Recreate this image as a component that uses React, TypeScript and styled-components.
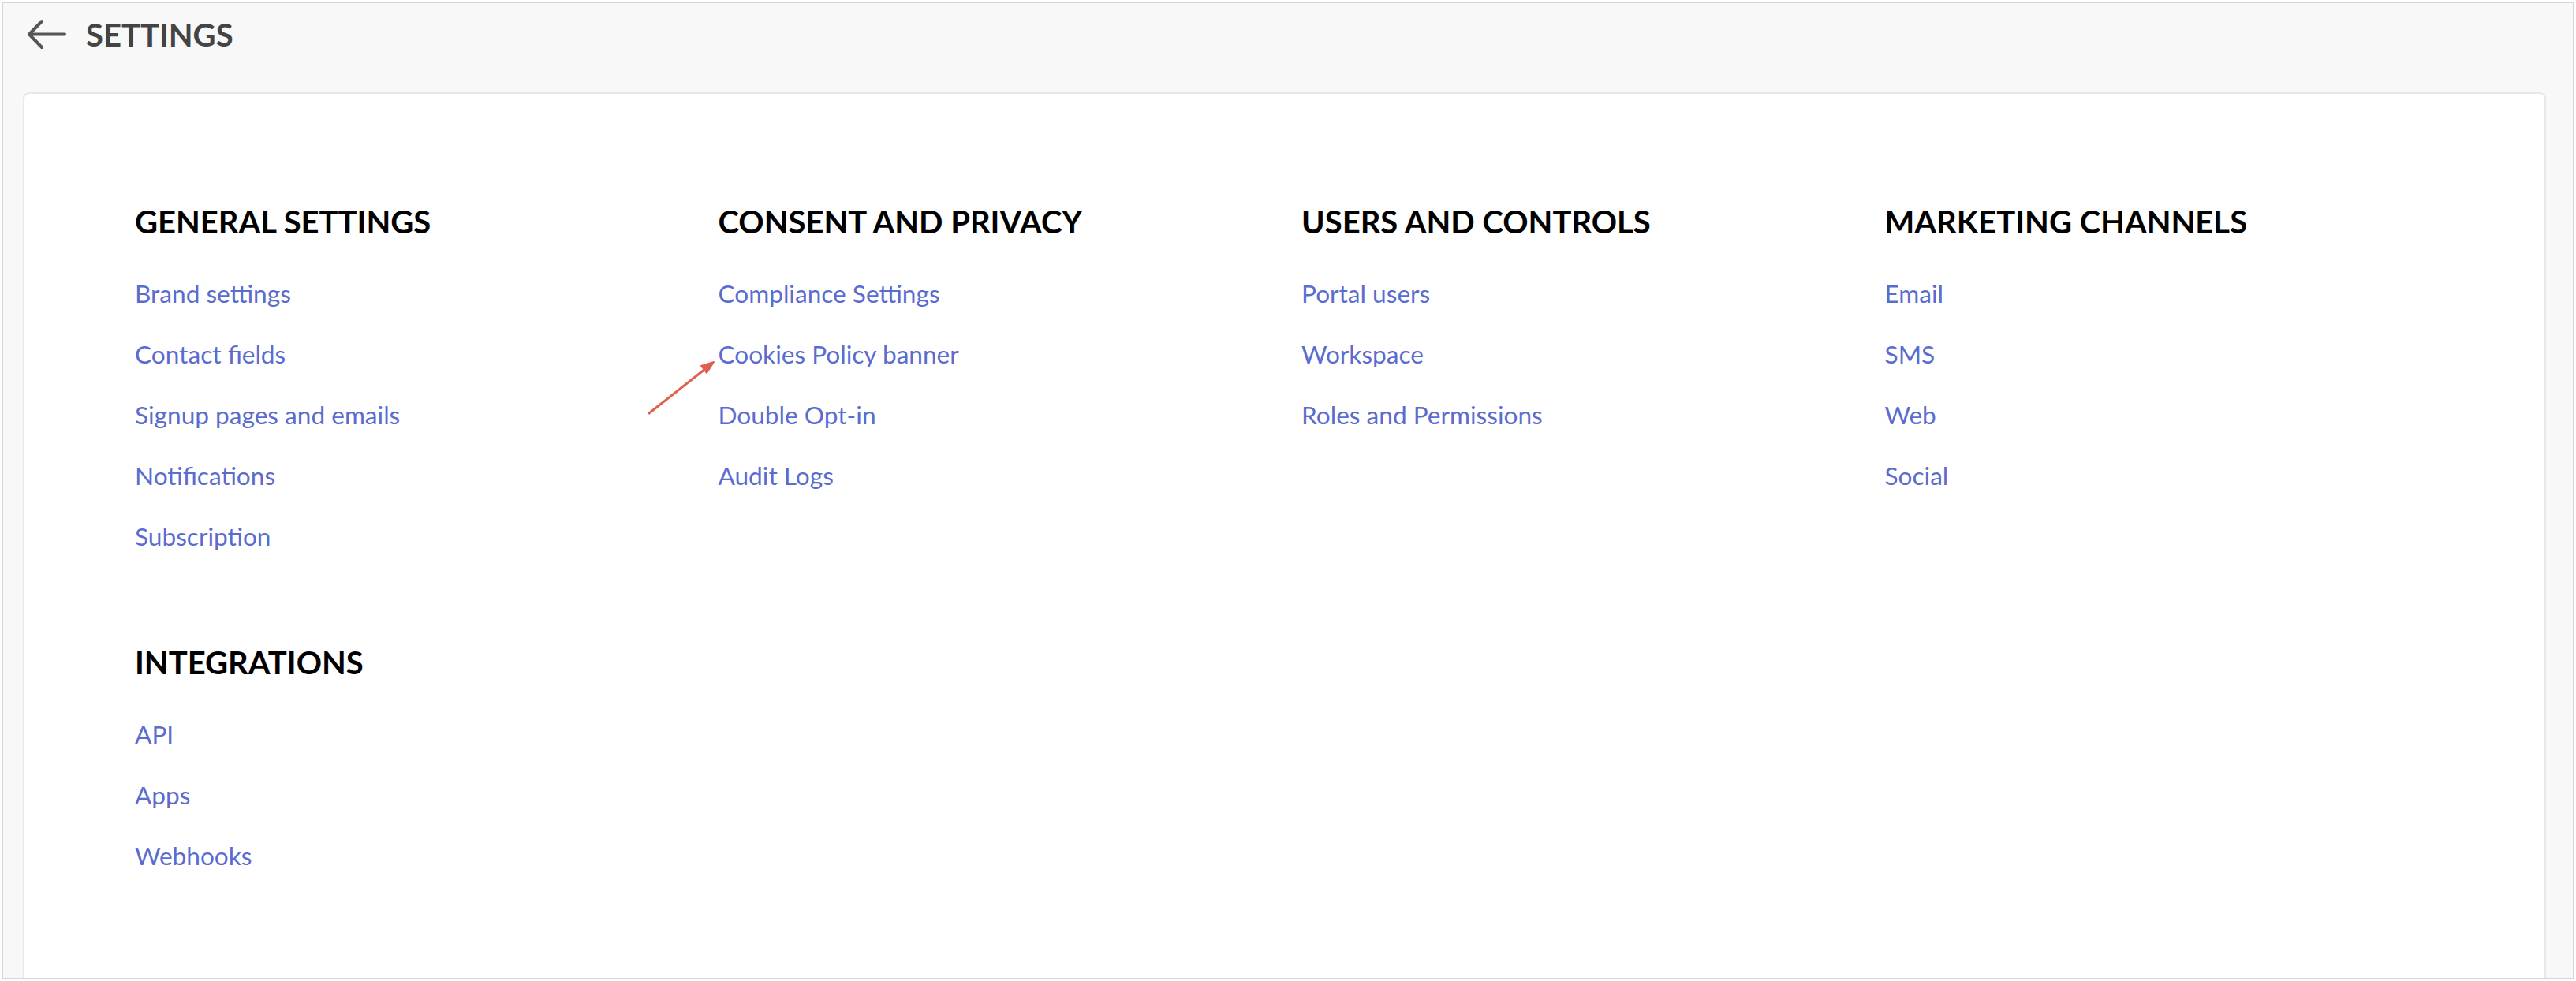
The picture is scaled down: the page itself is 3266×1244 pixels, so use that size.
import React from "react";
import styled, { createGlobalStyle } from "styled-components";

const Global = createGlobalStyle`
  html, body { margin: 0; padding: 0; background: #ffffff; }
  body { font-family: Lato, "Open Sans", sans-serif; }
  * { box-sizing: border-box; }
`;

const Frame = styled.div`
  position: relative;
  margin: 2px;
  height: 1240px;
  border: 2px solid #d4d5d7;
  background: #f8f8f8;
  overflow: hidden;
  display: flex;
  flex-direction: column;
`;

const TopBar = styled.header`
  display: flex;
  align-items: center;
  gap: 24px;
  height: 80px;
  padding: 0 0 0 29px;
`;

const BackButton = styled.button`
  display: flex;
  align-items: center;
  justify-content: center;
  padding: 0;
  border: none;
  background: transparent;
  width: 52px;
  height: 40px;
  cursor: pointer;
`;

const PageTitle = styled.h1`
  margin: 0;
  font-family: Lato, sans-serif;
  font-weight: 700;
  font-size: 40px;
  color: #444444;
  letter-spacing: 0;
`;

const Card = styled.main`
  position: relative;
  flex: 1;
  margin: 33px 34px 0 25px;
  background: #ffffff;
  border: 2px solid #e8e8e8;
  border-bottom: none;
  border-radius: 8px 8px 0 0;
  padding: 138px 0 0 140px;
`;

const Grid = styled.div`
  display: grid;
  grid-template-columns: repeat(4, 739.5px);
  row-gap: 98px;
`;

const Section = styled.section`
  display: flex;
  flex-direction: column;
`;

const SectionTitle = styled.h2`
  margin: 0 0 28px 0;
  font-family: Lato, sans-serif;
  font-weight: 700;
  font-size: 40px;
  line-height: 48px;
  color: #000000;
`;

const LinkList = styled.ul`
  list-style: none;
  margin: 0;
  padding: 0;
`;

const LinkItem = styled.li`
  height: 77px;
  display: flex;
  align-items: center;
`;

const SettingLink = styled.a`
  font-family: Lato, sans-serif;
  font-size: 31.6px;
  color: #5b6ccf;
  text-decoration: none;
`;

const Annotation = styled.svg`
  position: absolute;
  left: 814px;
  top: 451px;
  pointer-events: none;
`;

const sections = [
  {
    title: "GENERAL SETTINGS",
    links: ["Brand settings", "Contact fields", "Signup pages and emails", "Notifications", "Subscription"],
  },
  {
    title: "CONSENT AND PRIVACY",
    links: ["Compliance Settings", "Cookies Policy banner", "Double Opt-in", "Audit Logs"],
  },
  {
    title: "USERS AND CONTROLS",
    links: ["Portal users", "Workspace", "Roles and Permissions"],
  },
  {
    title: "MARKETING CHANNELS",
    links: ["Email", "SMS", "Web", "Social"],
  },
  {
    title: "INTEGRATIONS",
    links: ["API", "Apps", "Webhooks"],
  },
];

export default function App() {
  return (
    <>
      <Global />
      <Frame>
        <TopBar>
          <BackButton aria-label="Back">
            <svg width="52" height="40" viewBox="0 0 52 40" fill="none">
              <path d="M49 19.5H5M20 3L4 19.5L20 36" stroke="#555555" strokeWidth="4" strokeLinecap="round" strokeLinejoin="round" />
            </svg>
          </BackButton>
          <PageTitle>SETTINGS</PageTitle>
        </TopBar>
        <Card>
          <Grid>
            {sections.map((s) => (
              <Section key={s.title}>
                <SectionTitle>{s.title}</SectionTitle>
                <LinkList>
                  {s.links.map((l) => (
                    <LinkItem key={l}>
                      <SettingLink href="#">{l}</SettingLink>
                    </LinkItem>
                  ))}
                </LinkList>
              </Section>
            ))}
          </Grid>
        </Card>
        <Annotation width="92" height="74" viewBox="0 0 92 74">
          <path d="M5 69L81 9" stroke="#e0604f" strokeWidth="3" strokeLinecap="round" />
          <path d="M87 4L71 9L78 18Z" fill="#e0604f" stroke="#e0604f" strokeWidth="2" strokeLinejoin="round" />
        </Annotation>
      </Frame>
    </>
  );
}
